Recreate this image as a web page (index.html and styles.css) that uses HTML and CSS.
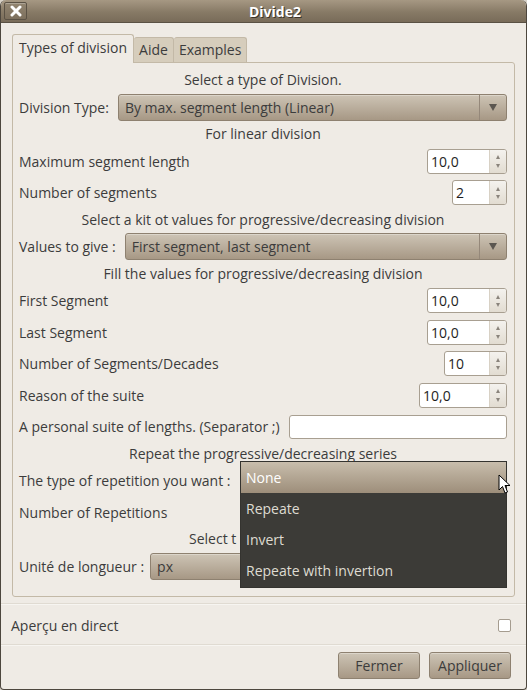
FILE: index.html
```html
<!DOCTYPE html>
<html lang="en">
<head>
  <meta charset="UTF-8">
  <title>Divide2</title>
  <link rel="stylesheet" href="styles.css">
</head>
<body>
  <div class="window">
    <div class="titlebar">
      <div class="close-btn">
        <svg width="12" height="12" viewBox="0 0 12 12"><path d="M2 2 L10 10 M10 2 L2 10" stroke="#fff" stroke-width="3" stroke-linecap="round"/></svg>
      </div>
      <div class="title">Divide2</div>
    </div>

    <div class="body">
      <div class="notebook">
        <div class="tabs">
          <div class="tab active">Types of division</div>
          <div class="tab">Aide</div>
          <div class="tab">Examples</div>
        </div>

        <div class="page">
          <div class="heading">Select a type of Division.</div>
          <div class="row">
            <span>Division Type:</span>
            <div class="combo"><span class="value">By max. segment length (Linear)</span><span class="arrow"><svg width="8" height="7" viewBox="0 0 8 7"><path d="M0 0 H8 L4 7 Z" fill="#5b5650"/></svg></span></div>
          </div>

          <div class="heading">For linear division</div>
          <div class="row">
            <span class="label">Maximum segment length</span>
            <div class="spin w80"><span class="num">10,0</span><span class="btns"><i class="up"></i><i class="down"></i></span></div>
          </div>
          <div class="row">
            <span class="label">Number of segments</span>
            <div class="spin w55"><span class="num">2</span><span class="btns"><i class="up"></i><i class="down"></i></span></div>
          </div>

          <div class="heading">Select a kit ot values for progressive/decreasing division</div>
          <div class="row">
            <span>Values to give :</span>
            <div class="combo"><span class="value">First segment, last segment</span><span class="arrow"><svg width="8" height="7" viewBox="0 0 8 7"><path d="M0 0 H8 L4 7 Z" fill="#5b5650"/></svg></span></div>
          </div>

          <div class="heading">Fill the values for progressive/decreasing division</div>
          <div class="row">
            <span class="label">First Segment</span>
            <div class="spin w80"><span class="num">10,0</span><span class="btns"><i class="up"></i><i class="down"></i></span></div>
          </div>
          <div class="row">
            <span class="label">Last Segment</span>
            <div class="spin w80"><span class="num">10,0</span><span class="btns"><i class="up"></i><i class="down"></i></span></div>
          </div>
          <div class="row">
            <span class="label">Number of Segments/Decades</span>
            <div class="spin w63"><span class="num">10</span><span class="btns"><i class="up"></i><i class="down"></i></span></div>
          </div>
          <div class="row">
            <span class="label">Reason of the suite</span>
            <div class="spin w88"><span class="num">10,0</span><span class="btns"><i class="up"></i><i class="down"></i></span></div>
          </div>
          <div class="row">
            <span>A personal suite of lengths. (Separator ;)</span>
            <div class="entry"></div>
          </div>

          <div class="heading">Repeat the progressive/decreasing series</div>
          <div class="row popup-anchor">
            <span>The type of repetition you want :</span>
            <div class="combo"><span class="value"></span><span class="arrow"></span></div>

            <!-- open combo list -->
            <div class="popup">
              <div class="item selected">None</div>
              <div class="item">Repeate</div>
              <div class="item">Invert</div>
              <div class="item">Repeate with invertion</div>
              <svg class="cursor" width="13" height="21" viewBox="0 0 13 21"><path d="M1 1 L1 16 L4.5 12.5 L7 19 L9.5 18 L7 11.5 L12 11.5 Z" fill="#fff" stroke="#000" stroke-width="1" stroke-linejoin="round"/></svg>
            </div>
          </div>
          <div class="row">
            <span class="label">Number of Repetitions</span>
            <div class="spin w63"><span class="num"></span><span class="btns"></span></div>
          </div>

          <div class="heading"><span class="clipped">Select t</span></div>
          <div class="row unit-row">
            <span>Unité de longueur :</span>
            <div class="combo"><span class="value">px</span><span class="arrow"></span></div>
          </div>
        </div>
      </div>

      <div class="sep"></div>
      <div class="preview-row">
        <span>Aperçu en direct</span>
        <span class="checkbox"></span>
      </div>
      <div class="sep"></div>

      <div class="actions">
        <button class="btn">Fermer</button>
        <button class="btn">Appliquer</button>
      </div>
    </div>
  </div>
</body>
</html>
```

FILE: styles.css
```css
html {
  background: #d8d2c8;
}

body {
  margin: 0;
  font-family: "Open Sans", "Noto Sans", sans-serif;
  font-size: 14px;
  color: #3c3c3c;
}

.window {
  width: 527px;
  height: 690px;
  box-sizing: border-box;
  display: flex;
  flex-direction: column;
  background: #efebe5;
  border: 1px solid #4d473e;
  border-top: none;
  border-radius: 6px 6px 4px 4px;
  overflow: hidden;
}

/* title bar */
.titlebar {
  height: 22px;
  flex: none;
  display: flex;
  align-items: center;
  padding: 0 3px;
  background: linear-gradient(#a69883, #877a66 55%, #786b59);
  border-bottom: 1px solid #5a5144;
}

.close-btn {
  width: 21px;
  height: 16px;
  display: flex;
  align-items: center;
  justify-content: center;
  border: 1px solid #5b5245;
  border-radius: 2px;
  background: linear-gradient(#928571, #7d705d);
  box-shadow: inset 0 1px 0 rgba(255, 255, 255, 0.25);
}

.title {
  flex: 1;
  text-align: center;
  font-weight: bold;
  font-size: 14px;
  color: #fff;
  text-shadow: 1px 1px 0 #3b342a;
}

.body {
  flex: 1;
  display: flex;
  flex-direction: column;
  padding: 11px 11px 10px;
}

/* notebook */
.tabs {
  display: flex;
  align-items: flex-end;
  height: 28px;
}

.tab {
  height: 25px;
  box-sizing: border-box;
  padding: 0 5px;
  line-height: 24px;
  background: #d6cdbc;
  border: 1px solid #c3b9a7;
  border-bottom: none;
  border-left: none;
  border-radius: 3px 3px 0 0;
}

.tab.active {
  height: 29px;
  margin-bottom: -1px;
  padding: 0 6px;
  line-height: 26px;
  background: #efebe5;
  border-left: 1px solid #c3b9a7;
  position: relative;
}

.page {
  height: 535px;
  box-sizing: border-box;
  padding: 6px 7px 14px 6px;
  border: 1px solid #c3b9a7;
  border-radius: 0 3px 3px 3px;
}

.heading {
  height: 22.5px;
  line-height: 22px;
  text-align: center;
  white-space: nowrap;
}

.heading .clipped {
  display: inline-block;
  width: 148px;
  text-align: left;
}

.row {
  height: 31.5px;
  display: flex;
  align-items: center;
  gap: 9px;
  white-space: nowrap;
}

.row .label {
  flex: 1;
}

.unit-row {
  gap: 6px;
}

/* combo box */
.combo {
  flex: 1;
  height: 27px;
  box-sizing: border-box;
  display: flex;
  align-items: center;
  padding-left: 6px;
  border: 1px solid #8e8170;
  border-radius: 3px;
  background: linear-gradient(#cdc4b5, #a79885);
  box-shadow: inset 0 1px 0 rgba(255, 255, 255, 0.3);
}

.combo .value {
  flex: 1;
}

.combo .arrow {
  width: 26px;
  height: 100%;
  display: flex;
  align-items: center;
  justify-content: center;
  border-left: 1px solid #95887a;
}

/* spin button */
.spin {
  height: 25px;
  box-sizing: border-box;
  display: flex;
  background: #fff;
  border: 1px solid #a89f91;
  border-radius: 3px;
  overflow: hidden;
}

.spin.w55 { width: 55px; }
.spin.w63 { width: 63px; }
.spin.w80 { width: 80px; }
.spin.w88 { width: 88px; }

.spin .num {
  flex: 1;
  padding-left: 3px;
  line-height: 23px;
  color: #1e1e1e;
}

.spin .btns {
  width: 16px;
  display: flex;
  flex-direction: column;
  align-items: center;
  justify-content: space-around;
  padding: 3px 0;
  background: linear-gradient(#f4f2ee, #e2dcd1);
  border-left: 1px solid #d8d1c5;
}

.spin .up,
.spin .down {
  width: 0;
  height: 0;
  border-left: 2.5px solid transparent;
  border-right: 2.5px solid transparent;
}

.spin .up {
  border-bottom: 4px solid #8a847c;
}

.spin .down {
  border-top: 4px solid #8a847c;
}

.entry {
  flex: 1;
  height: 24px;
  box-sizing: border-box;
  background: #fff;
  border: 1px solid #a89f91;
  border-radius: 3px;
}

/* open combo list */
.popup-anchor {
  position: relative;
}

.popup {
  position: absolute;
  top: -4px;
  left: 221px;
  right: 0;
  z-index: 2;
  padding-bottom: 1px;
  background: #3c3b37;
  border: 1px solid #34332f;
}

.popup .item {
  height: 31px;
  line-height: 31px;
  padding-left: 5px;
  color: #dfdbd2;
}

.popup .item.selected {
  height: 31px;
  line-height: 31px;
  color: #fff;
  background: linear-gradient(#c8bdac, #9d8e7a);
}

.cursor {
  position: absolute;
  left: 257px;
  top: 12px;
}

/* bottom area */
.sep {
  height: 0;
  margin: 6px -11px 0;
  border-top: 1px solid #e0dbd2;
  border-bottom: 1px solid #f7f5f1;
}

.sep + .actions {
  margin-top: 6px;
}

.preview-row {
  height: 39px;
  display: flex;
  align-items: center;
  justify-content: space-between;
  margin-left: -1px;
  padding: 2px 4px 0 0;
  box-sizing: border-box;
}

.preview-row + .sep {
  margin-top: 0;
}

.checkbox {
  width: 13px;
  height: 13px;
  box-sizing: border-box;
  background: #fff;
  border: 1px solid #a59c8f;
  border-radius: 2px;
}

.actions {
  display: flex;
  justify-content: flex-end;
  gap: 9px;
  padding-right: 4px;
}

.btn {
  width: 82px;
  height: 27px;
  font: inherit;
  color: #3c3c3c;
  border: 1px solid #8e8170;
  border-radius: 3px;
  background: linear-gradient(#cdc4b5, #a79885);
  box-shadow: inset 0 1px 0 rgba(255, 255, 255, 0.3);
  padding: 0;
}
```
